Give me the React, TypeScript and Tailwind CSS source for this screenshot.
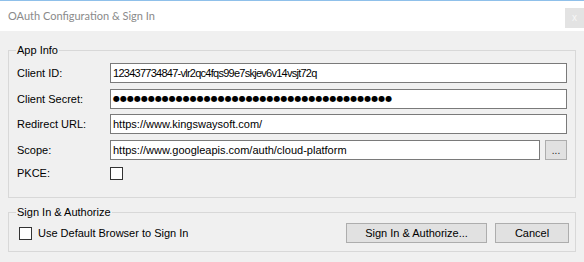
import React from "react";

const ui = { fontFamily: '"Liberation Sans", Arial, sans-serif' };

function Field({
  value,
  width,
  dots,
  tight,
}: {
  value: string;
  width: string;
  dots?: boolean;
  tight?: boolean;
}) {
  return (
    <div
      className={`h-[20px] ${width} shrink-0 bg-white border border-[#7a7a7a] pl-[2px] flex items-center overflow-hidden whitespace-nowrap text-[11px] text-black leading-none`}
    >
      {dots ? (
        <span className="text-[8px] tracking-[0px] leading-none" style={{ fontFamily: '"DejaVu Sans", sans-serif' }}>
          {value}
        </span>
      ) : (
        <span className={tight ? "tracking-[-0.74px]" : ""}>{value}</span>
      )}
    </div>
  );
}

function Row({ label, children, mt }: { label: string; children: React.ReactNode; mt: string }) {
  return (
    <div className={`flex items-center ${mt}`}>
      <div className="w-[93px] shrink-0 text-[11px] text-black leading-none">{label}</div>
      {children}
    </div>
  );
}

function Check() {
  return <div className="w-[13px] h-[13px] shrink-0 bg-white border border-[#333333]" />;
}

export default function App() {
  const dots = "●".repeat(40);
  return (
    <div className="w-[584px] h-[262px] bg-[#f0f0f0] overflow-hidden" style={ui}>
      <div className="h-[31px] bg-white border-t border-[#8fc0ea] flex justify-between items-start">
        <div
          className="pl-[8px] pt-[7px] text-[11px] leading-[15px] text-[#8a8a8a]"
          style={{ fontFamily: 'Lato, "Noto Sans", sans-serif' }}
        >
          OAuth Configuration &amp; Sign In
        </div>
        <div className="mt-[7px] w-[19px] h-[20px] bg-[#e3e3e3] flex items-center justify-center text-[10px] text-[#f7f7f7] leading-none">
          x
        </div>
      </div>
      <div className="px-[8px]">
        <fieldset className="mt-[12px] border border-[#d8d8d8] px-0 pb-[17px] pr-[8px]">
          <legend className="ml-[7px] px-px text-[11px] leading-[14px] text-black">App Info</legend>
          <div className="pl-[8px]">
            <Row label="Client ID:" mt="mt-[6px]">
              <Field value="123437734847-vlr2qc4fqs99e7skjev6v14vsjt72q" width="w-[457px]" tight />
            </Row>
            <Row label="Client Secret:" mt="mt-[6px]">
              <Field value={dots} width="w-[457px]" dots />
            </Row>
            <Row label="Redirect URL:" mt="mt-[5px]">
              <Field value="https://www.kingswaysoft.com/" width="w-[457px]" />
            </Row>
            <Row label="Scope:" mt="mt-[6px]">
              <Field value="https://www.googleapis.com/auth/cloud-platform" width="w-[430px]" />
              <div className="ml-[5px] w-[22px] h-[20px] shrink-0 bg-[#e1e1e1] border border-[#adadad] flex items-end justify-center pb-[3px] text-[10px] leading-none text-[#222]">
                ...
              </div>
            </Row>
            <Row label="PKCE:" mt="mt-[7px]">
              <Check />
            </Row>
          </div>
        </fieldset>
        <fieldset className="mt-[7px] border border-[#d8d8d8] px-0 pb-[8px]">
          <legend className="ml-[7px] px-px text-[11px] leading-[14px] text-black">Sign In &amp; Authorize</legend>
          <div className="mt-[4px] flex items-center pl-[10px] pr-[6px]">
            <Check />
            <div className="ml-[6px] text-[11px] leading-none text-black">Use Default Browser to Sign In</div>
            <div className="flex-1" />
            <div className="w-[141px] h-[20px] bg-[#e1e1e1] border border-[#adadad] flex items-center justify-center text-[11px] leading-none text-black">
              Sign In &amp; Authorize...
            </div>
            <div className="ml-[8px] w-[74px] h-[20px] bg-[#e1e1e1] border border-[#adadad] flex items-center justify-center text-[11px] leading-none text-black">
              Cancel
            </div>
          </div>
        </fieldset>
      </div>
    </div>
  );
}
